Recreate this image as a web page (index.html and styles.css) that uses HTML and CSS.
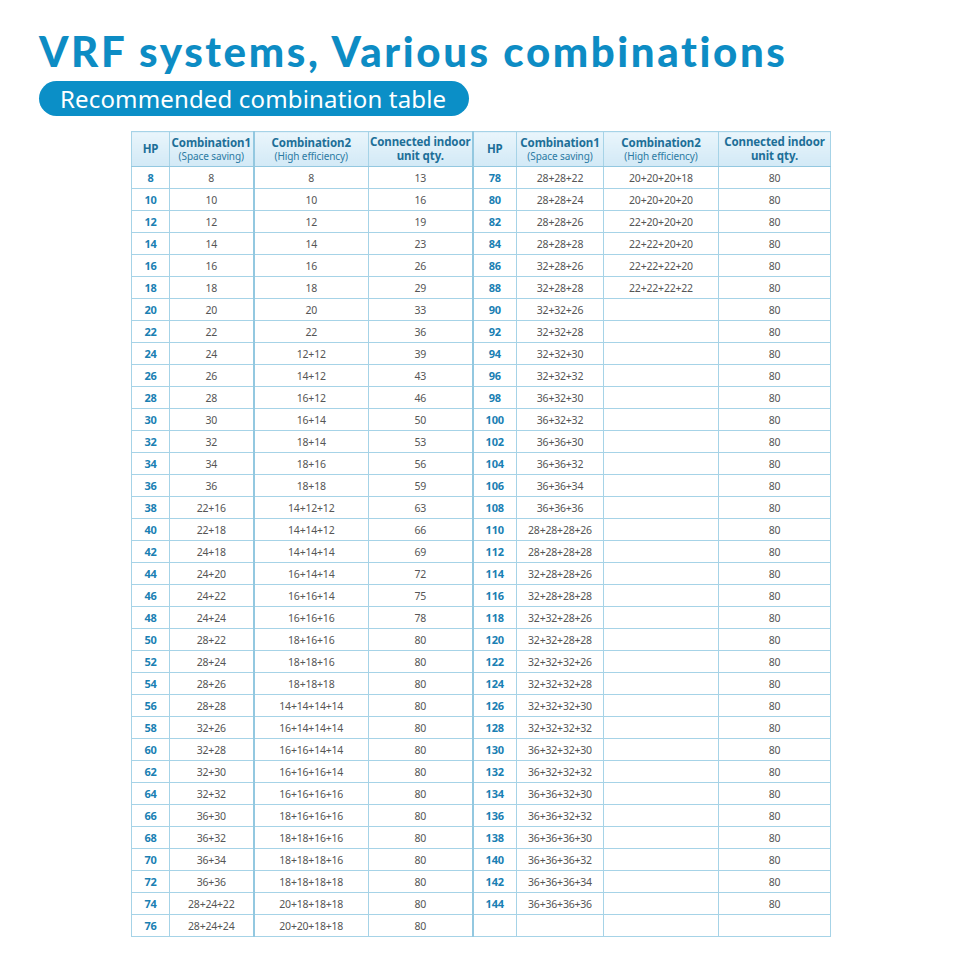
FILE: index.html
```html
<!DOCTYPE html>
<html lang="en">
<head>
<meta charset="utf-8">
<title>VRF systems, Various combinations</title>
<link rel="stylesheet" href="styles.css">
</head>
<body>
<div class="page">
  <h1 class="title">VRF systems, Various combinations</h1>
  <div class="pill">Recommended combination table</div>
  <table class="combo">
    <colgroup>
      <col class="w-hp1"><col class="w-c1a"><col class="w-c2a"><col class="w-qa">
      <col class="w-hp2"><col class="w-c1b"><col class="w-c2b"><col class="w-qb">
    </colgroup>
    <thead>
      <tr>
        <th>HP</th>
        <th><span class="main">Combination1</span><span class="sub">(Space saving)</span></th>
        <th class="split"><span class="main">Combination2</span><span class="sub">(High efficiency)</span></th>
        <th><span class="main">Connected indoor</span><span class="main">unit qty.</span></th>
        <th class="split">HP</th>
        <th><span class="main">Combination1</span><span class="sub">(Space saving)</span></th>
        <th><span class="main">Combination2</span><span class="sub">(High efficiency)</span></th>
        <th><span class="main">Connected indoor</span><span class="main">unit qty.</span></th>
      </tr>
    </thead>
    <tbody>
      <tr><td class="hp">8</td><td>8</td><td class="split">8</td><td>13</td><td class="hp split">78</td><td>28+28+22</td><td>20+20+20+18</td><td>80</td></tr>
      <tr><td class="hp">10</td><td>10</td><td class="split">10</td><td>16</td><td class="hp split">80</td><td>28+28+24</td><td>20+20+20+20</td><td>80</td></tr>
      <tr><td class="hp">12</td><td>12</td><td class="split">12</td><td>19</td><td class="hp split">82</td><td>28+28+26</td><td>22+20+20+20</td><td>80</td></tr>
      <tr><td class="hp">14</td><td>14</td><td class="split">14</td><td>23</td><td class="hp split">84</td><td>28+28+28</td><td>22+22+20+20</td><td>80</td></tr>
      <tr><td class="hp">16</td><td>16</td><td class="split">16</td><td>26</td><td class="hp split">86</td><td>32+28+26</td><td>22+22+22+20</td><td>80</td></tr>
      <tr><td class="hp">18</td><td>18</td><td class="split">18</td><td>29</td><td class="hp split">88</td><td>32+28+28</td><td>22+22+22+22</td><td>80</td></tr>
      <tr><td class="hp">20</td><td>20</td><td class="split">20</td><td>33</td><td class="hp split">90</td><td>32+32+26</td><td></td><td>80</td></tr>
      <tr><td class="hp">22</td><td>22</td><td class="split">22</td><td>36</td><td class="hp split">92</td><td>32+32+28</td><td></td><td>80</td></tr>
      <tr><td class="hp">24</td><td>24</td><td class="split">12+12</td><td>39</td><td class="hp split">94</td><td>32+32+30</td><td></td><td>80</td></tr>
      <tr><td class="hp">26</td><td>26</td><td class="split">14+12</td><td>43</td><td class="hp split">96</td><td>32+32+32</td><td></td><td>80</td></tr>
      <tr><td class="hp">28</td><td>28</td><td class="split">16+12</td><td>46</td><td class="hp split">98</td><td>36+32+30</td><td></td><td>80</td></tr>
      <tr><td class="hp">30</td><td>30</td><td class="split">16+14</td><td>50</td><td class="hp split">100</td><td>36+32+32</td><td></td><td>80</td></tr>
      <tr><td class="hp">32</td><td>32</td><td class="split">18+14</td><td>53</td><td class="hp split">102</td><td>36+36+30</td><td></td><td>80</td></tr>
      <tr><td class="hp">34</td><td>34</td><td class="split">18+16</td><td>56</td><td class="hp split">104</td><td>36+36+32</td><td></td><td>80</td></tr>
      <tr><td class="hp">36</td><td>36</td><td class="split">18+18</td><td>59</td><td class="hp split">106</td><td>36+36+34</td><td></td><td>80</td></tr>
      <tr><td class="hp">38</td><td>22+16</td><td class="split">14+12+12</td><td>63</td><td class="hp split">108</td><td>36+36+36</td><td></td><td>80</td></tr>
      <tr><td class="hp">40</td><td>22+18</td><td class="split">14+14+12</td><td>66</td><td class="hp split">110</td><td>28+28+28+26</td><td></td><td>80</td></tr>
      <tr><td class="hp">42</td><td>24+18</td><td class="split">14+14+14</td><td>69</td><td class="hp split">112</td><td>28+28+28+28</td><td></td><td>80</td></tr>
      <tr><td class="hp">44</td><td>24+20</td><td class="split">16+14+14</td><td>72</td><td class="hp split">114</td><td>32+28+28+26</td><td></td><td>80</td></tr>
      <tr><td class="hp">46</td><td>24+22</td><td class="split">16+16+14</td><td>75</td><td class="hp split">116</td><td>32+28+28+28</td><td></td><td>80</td></tr>
      <tr><td class="hp">48</td><td>24+24</td><td class="split">16+16+16</td><td>78</td><td class="hp split">118</td><td>32+32+28+26</td><td></td><td>80</td></tr>
      <tr><td class="hp">50</td><td>28+22</td><td class="split">18+16+16</td><td>80</td><td class="hp split">120</td><td>32+32+28+28</td><td></td><td>80</td></tr>
      <tr><td class="hp">52</td><td>28+24</td><td class="split">18+18+16</td><td>80</td><td class="hp split">122</td><td>32+32+32+26</td><td></td><td>80</td></tr>
      <tr><td class="hp">54</td><td>28+26</td><td class="split">18+18+18</td><td>80</td><td class="hp split">124</td><td>32+32+32+28</td><td></td><td>80</td></tr>
      <tr><td class="hp">56</td><td>28+28</td><td class="split">14+14+14+14</td><td>80</td><td class="hp split">126</td><td>32+32+32+30</td><td></td><td>80</td></tr>
      <tr><td class="hp">58</td><td>32+26</td><td class="split">16+14+14+14</td><td>80</td><td class="hp split">128</td><td>32+32+32+32</td><td></td><td>80</td></tr>
      <tr><td class="hp">60</td><td>32+28</td><td class="split">16+16+14+14</td><td>80</td><td class="hp split">130</td><td>36+32+32+30</td><td></td><td>80</td></tr>
      <tr><td class="hp">62</td><td>32+30</td><td class="split">16+16+16+14</td><td>80</td><td class="hp split">132</td><td>36+32+32+32</td><td></td><td>80</td></tr>
      <tr><td class="hp">64</td><td>32+32</td><td class="split">16+16+16+16</td><td>80</td><td class="hp split">134</td><td>36+36+32+30</td><td></td><td>80</td></tr>
      <tr><td class="hp">66</td><td>36+30</td><td class="split">18+16+16+16</td><td>80</td><td class="hp split">136</td><td>36+36+32+32</td><td></td><td>80</td></tr>
      <tr><td class="hp">68</td><td>36+32</td><td class="split">18+18+16+16</td><td>80</td><td class="hp split">138</td><td>36+36+36+30</td><td></td><td>80</td></tr>
      <tr><td class="hp">70</td><td>36+34</td><td class="split">18+18+18+16</td><td>80</td><td class="hp split">140</td><td>36+36+36+32</td><td></td><td>80</td></tr>
      <tr><td class="hp">72</td><td>36+36</td><td class="split">18+18+18+18</td><td>80</td><td class="hp split">142</td><td>36+36+36+34</td><td></td><td>80</td></tr>
      <tr><td class="hp">74</td><td>28+24+22</td><td class="split">20+18+18+18</td><td>80</td><td class="hp split">144</td><td>36+36+36+36</td><td></td><td>80</td></tr>
      <tr><td class="hp">76</td><td>28+24+24</td><td class="split">20+20+18+18</td><td>80</td><td class="hp split"></td><td></td><td></td><td></td></tr>
    </tbody>
  </table>
</div>
</body>
</html>
```

FILE: styles.css
```css
html, body {
  margin: 0;
  padding: 0;
  background: #ffffff;
}

.page {
  width: 960px;
  height: 960px;
  box-sizing: border-box;
  padding: 26px 0 0 0;
  font-family: "Noto Sans", "Open Sans", sans-serif;
}

.title {
  margin: 0 0 0 39px;
  font-family: "Lato", "Noto Sans", sans-serif;
  font-weight: 900;
  font-size: 42px;
  line-height: 50px;
  height: 50px;
  color: #0d8cc4;
  letter-spacing: 2.6px;
  white-space: nowrap;
}

.pill {
  margin: 5px 0 0 39px;
  width: 430px;
  height: 35px;
  box-sizing: border-box;
  border-radius: 18px;
  background: #0b8fc7;
  color: #ffffff;
  font-family: "Noto Sans", sans-serif;
  font-weight: 400;
  font-size: 24px;
  line-height: 35px;
  padding-left: 21px;
  letter-spacing: 0.15px;
  white-space: nowrap;
}

.combo {
  margin: 15px 0 0 131px;
  width: 699px;
  border-collapse: collapse;
  table-layout: fixed;
  font-family: "Noto Sans", "Open Sans", sans-serif;
}

.w-hp1 { width: 38px; }
.w-c1a { width: 84px; }
.w-c2a { width: 115px; }
.w-qa { width: 104px; }
.w-hp2 { width: 44px; }
.w-c1b { width: 87px; }
.w-c2b { width: 115px; }
.w-qb { width: 112px; }

.combo th,
.combo td {
  border: 1px solid #a6d3e7;
  text-align: center;
  padding: 0;
  overflow: hidden;
  white-space: nowrap;
}

.combo .split {
  border-left: 2px solid #93c8e0;
}

.combo thead tr {
  height: 35px;
}

.combo th {
  background: linear-gradient(#e9f5fb, #d2e9f6);
  color: #1d6f98;
  font-weight: 700;
  font-size: 11.5px;
  line-height: 14px;
  letter-spacing: -0.1px;
  border-bottom-color: #93c8e0;
}

.combo th .main {
  display: block;
  line-height: 14px;
}

.combo th .sub {
  display: block;
  font-weight: 400;
  font-size: 10px;
  line-height: 12px;
  color: #2b7aa3;
}

.combo tbody tr {
  height: 22px;
}

.combo td {
  font-size: 10.5px;
  line-height: 14px;
  color: #555555;
  letter-spacing: -0.2px;
}

.combo td.hp {
  color: #1a7fb3;
  font-weight: 700;
  font-size: 11px;
}
```
